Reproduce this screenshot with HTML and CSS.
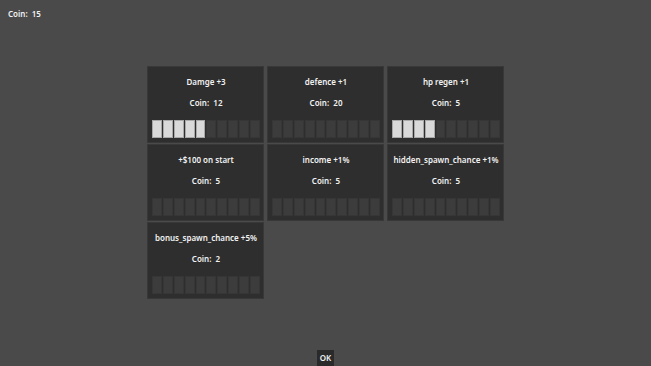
FILE: index.html
```html
<!DOCTYPE html>
<html>
<head>
<meta charset="utf-8">
<link rel="stylesheet" href="styles.css">
</head>
<body>
<div class="screen">
  <div class="hud">Coin:  15</div>
  <div class="grid">
    <div class="card">
      <div class="title">Damge +3</div>
      <div class="cost">Coin:  12</div>
      <div class="bar"><span class="seg on"></span><span class="seg on"></span><span class="seg on"></span><span class="seg on"></span><span class="seg on"></span><span class="seg"></span><span class="seg"></span><span class="seg"></span><span class="seg"></span><span class="seg"></span></div>
    </div>
    <div class="card">
      <div class="title">defence +1</div>
      <div class="cost">Coin:  20</div>
      <div class="bar"><span class="seg"></span><span class="seg"></span><span class="seg"></span><span class="seg"></span><span class="seg"></span><span class="seg"></span><span class="seg"></span><span class="seg"></span><span class="seg"></span><span class="seg"></span></div>
    </div>
    <div class="card">
      <div class="title">hp regen +1</div>
      <div class="cost">Coin:  5</div>
      <div class="bar"><span class="seg on"></span><span class="seg on"></span><span class="seg on"></span><span class="seg on"></span><span class="seg"></span><span class="seg"></span><span class="seg"></span><span class="seg"></span><span class="seg"></span><span class="seg"></span></div>
    </div>
    <div class="card">
      <div class="title">+$100 on start</div>
      <div class="cost">Coin:  5</div>
      <div class="bar"><span class="seg"></span><span class="seg"></span><span class="seg"></span><span class="seg"></span><span class="seg"></span><span class="seg"></span><span class="seg"></span><span class="seg"></span><span class="seg"></span><span class="seg"></span></div>
    </div>
    <div class="card">
      <div class="title">income +1%</div>
      <div class="cost">Coin:  5</div>
      <div class="bar"><span class="seg"></span><span class="seg"></span><span class="seg"></span><span class="seg"></span><span class="seg"></span><span class="seg"></span><span class="seg"></span><span class="seg"></span><span class="seg"></span><span class="seg"></span></div>
    </div>
    <div class="card">
      <div class="title">hidden_spawn_chance +1%</div>
      <div class="cost">Coin:  5</div>
      <div class="bar"><span class="seg"></span><span class="seg"></span><span class="seg"></span><span class="seg"></span><span class="seg"></span><span class="seg"></span><span class="seg"></span><span class="seg"></span><span class="seg"></span><span class="seg"></span></div>
    </div>
    <div class="card">
      <div class="title">bonus_spawn_chance +5%</div>
      <div class="cost">Coin:  2</div>
      <div class="bar"><span class="seg"></span><span class="seg"></span><span class="seg"></span><span class="seg"></span><span class="seg"></span><span class="seg"></span><span class="seg"></span><span class="seg"></span><span class="seg"></span><span class="seg"></span></div>
    </div>
  </div>
  <div class="footer"><button class="ok">OK</button></div>
</div>
</body>
</html>
```
FILE: styles.css
```css
html, body {
  margin: 0;
  padding: 0;
  background: #4a4a4a;
}
body {
  font-family: "Noto Sans", "Open Sans", sans-serif;
  font-size: 8px;
  font-weight: 600;
  color: #f2f2f2;
}
.screen {
  width: 651px;
  height: 366px;
  display: flex;
  flex-direction: column;
  overflow: hidden;
}
.hud {
  white-space: pre;
  padding: 8px 0 0 8px;
  line-height: 12px;
  height: 12px;
}
.grid {
  margin: 46px auto 0;
  display: grid;
  grid-template-columns: repeat(3, 117px);
  grid-auto-rows: 77px;
  column-gap: 3px;
  row-gap: 1px;
}
.card {
  box-sizing: border-box;
  background: #2e2e2e;
  border: 1px solid #383838;
  padding: 9px 3px 4px 4px;
  display: flex;
  flex-direction: column;
  align-items: center;
}
.title {
  line-height: 12px;
  white-space: pre;
}
.cost {
  margin-top: 9px;
  line-height: 12px;
  white-space: pre;
}
.bar {
  margin-top: 11px;
  align-self: stretch;
  display: grid;
  grid-template-columns: repeat(10, 1fr);
  column-gap: 1px;
  height: 18px;
}
.seg {
  box-sizing: border-box;
  background: #3c3c3c;
  border: 1px solid #363636;
}
.seg.on {
  background: #d9d9d9;
  border: 1px solid #a8a8a8;
}
.footer {
  margin-top: auto;
  display: flex;
  justify-content: center;
}
.ok {
  font: inherit;
  color: #f2f2f2;
  background: #2a2a2a;
  border: none;
  padding: 0 3px;
  height: 16px;
  line-height: 16px;
}
```
